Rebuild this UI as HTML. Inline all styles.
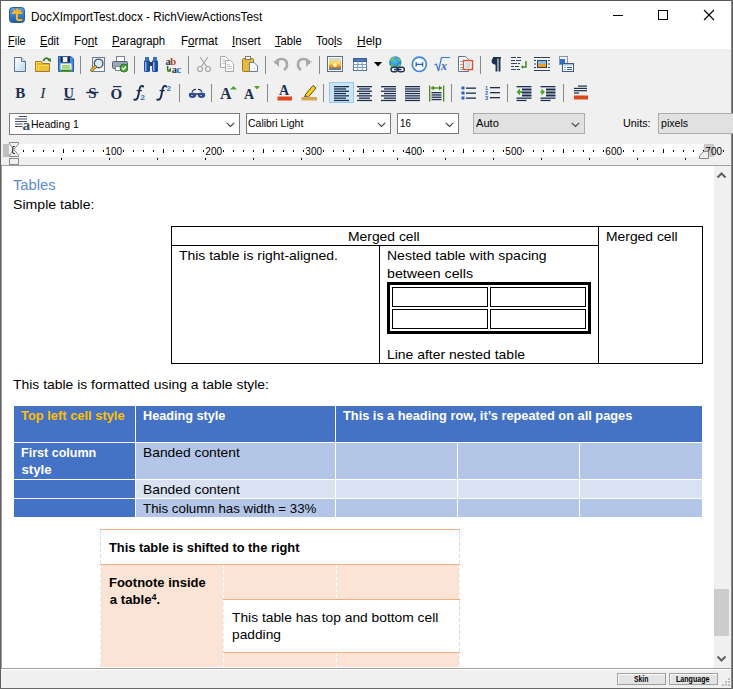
<!DOCTYPE html><html><head><meta charset="utf-8"><style>
html,body{margin:0;padding:0;}
body{width:733px;height:689px;overflow:hidden;position:relative;background:#f0f0f0;font-family:'Liberation Sans',sans-serif;}
div{position:absolute;box-sizing:border-box;}
.t{white-space:pre;}
</style></head><body>

<div style="left:0px;top:0px;width:733px;height:689px;background:#f0f0f0;"></div>
<div style="left:1px;top:1px;width:731px;height:48px;background:#ffffff;"></div>
<div style="left:0px;top:0px;width:733px;height:1px;background:#5a5a5a;"></div>
<div style="left:0px;top:0px;width:1px;height:689px;background:#5f5f5f;"></div>
<div style="left:731px;top:0px;width:1px;height:689px;background:#8a8a8a;"></div>
<div style="left:732px;top:0px;width:1px;height:689px;background:#5a5a5a;"></div>
<div style="left:0px;top:688px;width:733px;height:1px;background:#6a6a6a;"></div>
<svg style="position:absolute;left:9px;top:7px;" width="16" height="16" viewBox="0 0 16 16"><defs><linearGradient id="ig" x1="0" y1="0" x2="0" y2="1"><stop offset="0" stop-color="#5aa0e0"/><stop offset="1" stop-color="#1d5aa8"/></linearGradient></defs>
<rect x="0.5" y="0.5" width="15" height="15" rx="3" fill="url(#ig)" stroke="#2a5d9a"/>
<path d="M8 2.5V11.5Q8 13 9.5 13H12.5M3.5 6H12.5M5 3.5L8 6L11 3.5" stroke="#ffb526" stroke-width="2" fill="none" stroke-linecap="round"/></svg>
<div class="t" style="left:31.20px;top:10.80px;font-size:12px;line-height:12px;color:#000;font-weight:normal;font-family:'Liberation Sans',sans-serif;transform:scaleX(0.9802);transform-origin:0 0;">DocXImportTest.docx - RichViewActionsTest</div>
<div style="left:613px;top:15px;width:10px;height:1px;background:#000;"></div>
<div style="left:658px;top:10px;width:10px;height:10px;border:1px solid #000"></div>
<svg style="position:absolute;left:703px;top:9px;" width="12" height="12" viewBox="0 0 12 12"><path d="M1 1L11 11M11 1L1 11" stroke="#000" stroke-width="1.1"/></svg>
<div class="t" style="left:7.80px;top:34.80px;font-size:12px;line-height:12px;color:#000;font-weight:normal;font-family:'Liberation Sans',sans-serif;transform:scaleX(0.9147);transform-origin:0 0;text-underline-offset:1px;"><u>F</u>ile</div>
<div class="t" style="left:40.00px;top:34.80px;font-size:12px;line-height:12px;color:#000;font-weight:normal;font-family:'Liberation Sans',sans-serif;transform:scaleX(0.9240);transform-origin:0 0;text-underline-offset:1px;"><u>E</u>dit</div>
<div class="t" style="left:73.80px;top:34.80px;font-size:12px;line-height:12px;color:#000;font-weight:normal;font-family:'Liberation Sans',sans-serif;transform:scaleX(0.9792);transform-origin:0 0;text-underline-offset:1px;">Fo<u>n</u>t</div>
<div class="t" style="left:111.90px;top:34.80px;font-size:12px;line-height:12px;color:#000;font-weight:normal;font-family:'Liberation Sans',sans-serif;transform:scaleX(0.9493);transform-origin:0 0;text-underline-offset:1px;"><u>P</u>aragraph</div>
<div class="t" style="left:180.60px;top:34.80px;font-size:12px;line-height:12px;color:#000;font-weight:normal;font-family:'Liberation Sans',sans-serif;transform:scaleX(0.9655);transform-origin:0 0;text-underline-offset:1px;">F<u>o</u>rmat</div>
<div class="t" style="left:231.80px;top:34.80px;font-size:12px;line-height:12px;color:#000;font-weight:normal;font-family:'Liberation Sans',sans-serif;transform:scaleX(0.9600);transform-origin:0 0;text-underline-offset:1px;"><u>I</u>nsert</div>
<div class="t" style="left:274.80px;top:34.80px;font-size:12px;line-height:12px;color:#000;font-weight:normal;font-family:'Liberation Sans',sans-serif;transform:scaleX(0.9344);transform-origin:0 0;text-underline-offset:1px;"><u>T</u>able</div>
<div class="t" style="left:316.10px;top:34.80px;font-size:12px;line-height:12px;color:#000;font-weight:normal;font-family:'Liberation Sans',sans-serif;transform:scaleX(0.9315);transform-origin:0 0;text-underline-offset:1px;">Too<u>l</u>s</div>
<div class="t" style="left:356.80px;top:34.80px;font-size:12px;line-height:12px;color:#000;font-weight:normal;font-family:'Liberation Sans',sans-serif;transform:scaleX(0.9964);transform-origin:0 0;text-underline-offset:1px;"><u>H</u>elp</div>
<div style="left:80px;top:56px;width:1px;height:18px;background:#888888;"></div>
<div style="left:134px;top:56px;width:1px;height:18px;background:#888888;"></div>
<div style="left:188px;top:56px;width:1px;height:18px;background:#888888;"></div>
<div style="left:265px;top:56px;width:1px;height:18px;background:#888888;"></div>
<div style="left:319px;top:56px;width:1px;height:18px;background:#888888;"></div>
<div style="left:480px;top:56px;width:1px;height:18px;background:#888888;"></div>
<div style="left:179px;top:84px;width:1px;height:18px;background:#888888;"></div>
<div style="left:211px;top:84px;width:1px;height:18px;background:#888888;"></div>
<div style="left:267px;top:84px;width:1px;height:18px;background:#888888;"></div>
<div style="left:323px;top:84px;width:1px;height:18px;background:#888888;"></div>
<div style="left:451px;top:84px;width:1px;height:18px;background:#888888;"></div>
<div style="left:507px;top:84px;width:1px;height:18px;background:#888888;"></div>
<div style="left:563px;top:84px;width:1px;height:18px;background:#888888;"></div>
<svg style="position:absolute;left:12px;top:56px;" width="16" height="17" viewBox="0 0 16 17"><defs><linearGradient id="gn" x1="0" y1="0" x2="1" y2="1"><stop offset="0" stop-color="#ffffff"/><stop offset="1" stop-color="#bcd8ea"/></linearGradient></defs>
<path d="M2.5 1.5H9.5L13.5 5.5V15.5H2.5Z" fill="url(#gn)" stroke="#5b7288"/><path d="M9.5 1.5V5.5H13.5" fill="#dde9f2" stroke="#5b7288"/></svg>
<svg style="position:absolute;left:35px;top:56px;" width="16" height="17" viewBox="0 0 16 17"><path d="M0.5 5.5H6.5L8 7.5H14.5V15.5H0.5Z" fill="#e6b22e" stroke="#a67828"/><path d="M1.5 6.5V14.5M2 6.5H6" stroke="#ffe646" stroke-width="1"/><rect x="3" y="9" width="11" height="6" fill="#f0c038"/><path d="M3.5 9.5H13.5M3.5 9.5V14.5" stroke="#ffe646"/>
<path d="M8.3 5.2Q10.5 0.2 14.2 3.6" stroke="#2f7a1a" stroke-width="1.7" fill="none"/><path d="M12 3.8L16 2.2L15.6 6.2Z" fill="#2f7a1a"/></svg>
<svg style="position:absolute;left:58px;top:56px;" width="16" height="17" viewBox="0 0 16 17"><path d="M0.5 0.5H13L15.5 3V15.5H0.5Z" fill="#4a8ae0" stroke="#2a5aa0"/><rect x="2.5" y="1" width="9.5" height="5.5" fill="#1a2a48"/><rect x="4.8" y="1" width="4.6" height="5" fill="#f2f2f2"/>
<rect x="2.5" y="7.5" width="11" height="8" fill="#f4faf0"/><path d="M4 9.8H12M4 11.8H12" stroke="#7ac040" stroke-width="1.3"/><rect x="2.5" y="13.6" width="11" height="2.2" fill="#3a8a20"/></svg>
<svg style="position:absolute;left:89px;top:56px;" width="16" height="17" viewBox="0 0 16 17"><rect x="3.5" y="1.5" width="12" height="14" fill="#f6f8fb" stroke="#6a7e94"/><circle cx="9.6" cy="7.4" r="4.3" fill="#dcecf6" stroke="#4a5a6e" stroke-width="1.4"/><path d="M6.3 10.7L2.8 14.2" stroke="#7a5a1a" stroke-width="3.2" stroke-linecap="round"/><path d="M6.3 10.7L2.8 14.2" stroke="#e8b83a" stroke-width="1.8" stroke-linecap="round"/></svg>
<svg style="position:absolute;left:112px;top:56px;" width="16" height="17" viewBox="0 0 16 17"><rect x="4.5" y="0.5" width="8" height="5" fill="#fff" stroke="#7a8796"/><rect x="0.5" y="5.5" width="15" height="7" rx="1" fill="#9aa8b8" stroke="#56657a"/><rect x="3.5" y="10.5" width="9" height="4" fill="#fff" stroke="#7a8796"/>
<circle cx="12" cy="12" r="4" fill="#4aa83a" stroke="#2f7a2a"/><path d="M10 12L11.5 13.5L14 10.5" stroke="#fff" stroke-width="1.4" fill="none"/></svg>
<svg style="position:absolute;left:143px;top:56px;" width="16" height="17" viewBox="0 0 16 17"><rect x="1" y="4" width="6" height="12" rx="1.5" fill="#1e4f9e"/><rect x="9" y="4" width="6" height="12" rx="1.5" fill="#1e4f9e"/><rect x="2" y="1" width="4" height="4" fill="#3b6fc0"/><rect x="10" y="1" width="4" height="4" fill="#3b6fc0"/>
<rect x="2" y="6" width="1.5" height="9" fill="#8fb8ee"/><rect x="10" y="6" width="1.5" height="9" fill="#8fb8ee"/><rect x="6" y="6" width="4" height="4" fill="#2a3f66"/></svg>
<svg style="position:absolute;left:165px;top:56px;" width="17" height="17" viewBox="0 0 17 17"><text x="0.6" y="8.7" font-family="Liberation Serif" font-size="10.5" font-weight="bold" fill="#1f3558">a</text><text x="5.3" y="8.7" font-family="Liberation Serif" font-size="10.5" font-weight="bold" fill="#b0440f">b</text>
<text x="6.7" y="16.8" font-family="Liberation Serif" font-size="10.5" font-weight="bold" fill="#1f3558">a</text><text x="11.6" y="16.8" font-family="Liberation Serif" font-size="10.5" font-weight="bold" fill="#2a64d0">c</text><path d="M2.6 10V14.6" stroke="#2f6e12" stroke-width="1.5"/><path d="M2 15.7H5.9V11.6Z" fill="#2f6e12"/></svg>
<svg style="position:absolute;left:196px;top:56px;" width="16" height="17" viewBox="0 0 16 17"><path d="M4 1L11 11M12 1L5 11" stroke="#a8a8a8" stroke-width="1.3"/><circle cx="4" cy="13" r="2.5" fill="none" stroke="#a8a8a8" stroke-width="1.2"/><circle cx="12" cy="13" r="2.5" fill="none" stroke="#a8a8a8" stroke-width="1.2"/></svg>
<svg style="position:absolute;left:219px;top:56px;" width="16" height="17" viewBox="0 0 16 17"><path d="M1.5 0.5H6.5L9.5 3.5V11.5H1.5Z" fill="#fbfbfb" stroke="#a9a9a9"/><path d="M3 3.5H6M3 5.5H7.5M3 7.5H7.5" stroke="#c4c4c4" stroke-width="0.9"/><path d="M6.5 4.5H11.5L14.5 7.5V15.5H6.5Z" fill="#fbfbfb" stroke="#a9a9a9"/><path d="M8 8.5H11M8 10.5H13M8 12.5H13" stroke="#c4c4c4" stroke-width="0.9"/></svg>
<svg style="position:absolute;left:242px;top:56px;" width="16" height="17" viewBox="0 0 16 17"><rect x="0.5" y="2.5" width="11" height="13" rx="1" fill="#e8b838" stroke="#a07a20"/><rect x="3.5" y="0.5" width="5" height="3" fill="#fff" stroke="#7a7a7a"/><path d="M7.5 6.5H12L15.5 10V15.5H7.5Z" fill="#f4f8fb" stroke="#6a7f96"/></svg>
<svg style="position:absolute;left:273px;top:56px;" width="16" height="17" viewBox="0 0 16 17"><path d="M3 8Q3 3 8.5 3Q14 3 14 9Q14 12 11 14" stroke="#a9a9a9" stroke-width="2.6" fill="none"/><path d="M0 5L6 11V5Z" fill="#a9a9a9"/></svg>
<svg style="position:absolute;left:296px;top:56px;" width="16" height="17" viewBox="0 0 16 17"><path d="M13 8Q13 3 7.5 3Q2 3 2 9Q2 12 5 14" stroke="#a9a9a9" stroke-width="2.6" fill="none"/><path d="M16 5L10 11V5Z" fill="#a9a9a9"/></svg>
<svg style="position:absolute;left:327px;top:56px;" width="16" height="17" viewBox="0 0 16 17"><defs><linearGradient id="gs" x1="0" y1="0" x2="0" y2="1"><stop offset="0" stop-color="#c8def0"/><stop offset="0.45" stop-color="#ffd24a"/><stop offset="0.7" stop-color="#f08a1a"/><stop offset="1" stop-color="#3a70b8"/></linearGradient></defs>
<rect x="0.5" y="0.5" width="15" height="15" fill="#fff" stroke="#5a6f86"/><rect x="2" y="2" width="12" height="12" fill="url(#gs)"/><circle cx="8" cy="9" r="2" fill="#fff6c0"/></svg>
<svg style="position:absolute;left:350px;top:56px;" width="17" height="17" viewBox="0 0 17 17"><rect x="3.5" y="2.5" width="13" height="12" fill="#fff" stroke="#5a7aa6"/><rect x="3.5" y="2.5" width="13" height="3" fill="#4a78c0" stroke="#3a5f96"/><path d="M3.5 8.5H16.5M3.5 11.5H16.5M7.8 5.5V14.5M12.2 5.5V14.5" stroke="#7d9cc6"/></svg>
<svg style="position:absolute;left:388px;top:56px;" width="17" height="17" viewBox="0 0 17 17"><defs><radialGradient id="gg" cx="0.45" cy="0.4" r="0.6"><stop offset="0" stop-color="#4ac0f0"/><stop offset="1" stop-color="#2a78c0"/></radialGradient></defs><circle cx="7.3" cy="6.4" r="6.2" fill="url(#gg)"/>
<path d="M2 4Q4 1 7 1Q5 3 6 5Q3 6 2 4ZM9 2Q12 2 13 5Q11 6 10 4ZM2.5 9Q5 8 7 10Q5 12 3 11Z M11 8Q13 8 13 9Q12 11 10 11Z" fill="#6cc84a"/>
<rect x="3" y="11.2" width="6.6" height="4.6" rx="2.3" fill="#fff" stroke="#1f3552" stroke-width="1.4"/><rect x="9.8" y="11.2" width="6.6" height="4.6" rx="2.3" fill="#fff" stroke="#1f3552" stroke-width="1.4"/><path d="M6 13.5H13.5" stroke="#1f3552" stroke-width="1.5"/></svg>
<svg style="position:absolute;left:411px;top:56px;" width="17" height="17" viewBox="0 0 17 17"><ellipse cx="8.3" cy="8.3" rx="7" ry="7.2" fill="#fff" stroke="#3a86e0" stroke-width="1.7"/><path d="M5.2 8.4H11.6M5.2 6.2V10.4M11.6 6.2V10.4" stroke="#2a5fc8" stroke-width="1.4"/></svg>
<svg style="position:absolute;left:434px;top:56px;" width="16" height="17" viewBox="0 0 16 17"><path d="M0.5 9L2.5 8L4.5 15L7.5 1.5H16" stroke="#3a7ad0" stroke-width="1.2" fill="none"/><text x="7" y="13.5" font-family="Liberation Serif" font-style="italic" font-weight="bold" font-size="12" fill="#3a6ac8">x</text></svg>
<svg style="position:absolute;left:458px;top:56px;" width="16" height="17" viewBox="0 0 16 17"><path d="M0.5 0.5H7.5L10.5 3.5V15.5H0.5Z" fill="#fafcfe" stroke="#5f7488"/><path d="M2 5.5H5M2 8.5H5M2 11.5H5M2 13.5H8" stroke="#8aa0b6" stroke-width="0.9"/><rect x="5.5" y="4.5" width="9" height="9" fill="#fff" stroke="#e0502a" stroke-width="1.4"/><path d="M7.5 7H12.5M7.5 9H12.5M7.5 11H12.5" stroke="#9ab0c6" stroke-width="0.9"/></svg>
<svg style="position:absolute;left:489px;top:56px;" width="16" height="17" viewBox="0 0 16 17"><path d="M4 1.8H12" stroke="#1c3050" stroke-width="1.6"/><path d="M7.5 1.8V15.5M10.5 1.8V15.5" stroke="#1c3050" stroke-width="1.9" fill="none"/><path d="M7.5 1.2Q2.6 1.2 2.6 5Q2.6 8.8 7.5 8.8Z" fill="#1c3050"/></svg>
<svg style="position:absolute;left:511px;top:56px;" width="16" height="17" viewBox="0 0 16 17"><path d="M0 1.5H5M6 1.5H10M0 4.5H4M5 4.5H10M0 7.5H6M7 7.5H9M0 10.5H3M4 10.5H8M0 13.5H5M6 13.5H9" stroke="#2f4460" stroke-width="1.2"/><path d="M15 5V11H11" stroke="#3c8a1e" stroke-width="1.5" fill="none"/><path d="M12 9L10 11L12 13Z" fill="#3c8a1e"/></svg>
<svg style="position:absolute;left:534px;top:56px;" width="16" height="17" viewBox="0 0 16 17"><path d="M0 1.5H16M0 14.5H16M0 4.5H2M14 4.5H16M0 8H2M14 8H16M0 11.5H2M14 11.5H16" stroke="#2f4460" stroke-width="1.2"/><rect x="3.5" y="4.5" width="9" height="7" fill="#f0a020" stroke="#2f4460"/><rect x="4" y="5" width="8" height="3" fill="#8abadf"/></svg>
<svg style="position:absolute;left:558px;top:56px;" width="16" height="17" viewBox="0 0 16 17"><rect x="1.5" y="0.5" width="8" height="8" fill="none" stroke="#2a3a5a" stroke-dasharray="1 1"/><rect x="2" y="3" width="5" height="5" fill="#2f6fd0"/><rect x="4.5" y="7.5" width="11" height="8" fill="#f8fbff" stroke="#3a5a8a"/><rect x="5" y="8" width="10" height="1.5" fill="#a8c0dc"/><path d="M6.5 11.5H7.5M9 11.5H14M6.5 13.5H7.5M9 13.5H14" stroke="#3a5a8a"/></svg>
<svg style="position:absolute;left:374px;top:62px;" width="9" height="5" viewBox="0 0 9 5"><path d="M0 0H8L4 4.5Z" fill="#000"/></svg>
<svg style="position:absolute;left:14px;top:85px;" width="18" height="18" viewBox="0 0 18 18"><text x="1.3" y="13.1" font-family="Liberation Serif" font-size="15" font-weight="bold" font-style="normal" fill="#1c2f50">B</text></svg>
<svg style="position:absolute;left:38px;top:85px;" width="18" height="18" viewBox="0 0 18 18"><text x="2.2" y="13.3" font-family="Liberation Serif" font-size="15.5" font-weight="normal" font-style="italic" fill="#1c2f50">I</text></svg>
<svg style="position:absolute;left:62px;top:85px;" width="18" height="18" viewBox="0 0 18 18"><text x="1.6" y="12.8" font-family="Liberation Serif" font-size="14.5" font-weight="bold" font-style="normal" fill="#1c2f50">U</text><rect x="2.2" y="13.6" width="10.8" height="1.5" fill="#1c2f50"/></svg>
<svg style="position:absolute;left:85px;top:85px;" width="18" height="18" viewBox="0 0 18 18"><text x="3.3" y="13.2" font-family="Liberation Serif" font-size="15" font-weight="bold" font-style="normal" fill="#1c2f50">S</text><rect x="1.2" y="6.8" width="12.3" height="1.4" fill="#1c2f50"/></svg>
<svg style="position:absolute;left:109px;top:85px;" width="18" height="18" viewBox="0 0 18 18"><text x="1.6" y="14" font-family="Liberation Serif" font-size="15" font-weight="bold" font-style="normal" fill="#1c2f50">O</text><rect x="4" y="1" width="8.3" height="1.2" fill="#1c2f50"/></svg>
<svg style="position:absolute;left:132px;top:85px;" width="18" height="18" viewBox="0 0 18 18"><path d="M11.2 1.6Q10.2 0.4 8.9 1.2Q7.8 2 7.2 6Q6.4 11.5 5.3 13.6Q4.3 15.3 2.3 14.6" stroke="#1c2f50" stroke-width="1.9" fill="none" stroke-linecap="round"/><path d="M4.6 5.6H9.8" stroke="#1c2f50" stroke-width="1.3"/><text x="8.6" y="14.7" font-family="Liberation Sans" font-weight="bold" font-size="8" fill="#1f70c8">2</text></svg>
<svg style="position:absolute;left:155px;top:85px;" width="18" height="18" viewBox="0 0 18 18"><path d="M11.2 1.6Q10.2 0.4 8.9 1.2Q7.8 2 7.2 6Q6.4 11.5 5.3 13.6Q4.3 15.3 2.3 14.6" stroke="#1c2f50" stroke-width="1.9" fill="none" stroke-linecap="round"/><path d="M4.6 5.6H9.8" stroke="#1c2f50" stroke-width="1.3"/><text x="11.6" y="5.9" font-family="Liberation Sans" font-weight="bold" font-size="8" fill="#1f70c8">2</text></svg>
<svg style="position:absolute;left:188px;top:88px;" width="18" height="11" viewBox="0 0 18 11"><path d="M4 4Q5.5 1 8 1.5M14 4Q12.5 1 10 1.5" stroke="#1c2f50" stroke-width="1.2" fill="none"/><path d="M1 6H17" stroke="#1c2f50" stroke-width="1.5"/><ellipse cx="4.5" cy="7.3" rx="3.6" ry="2.7" fill="#2f4f8a"/><ellipse cx="13.5" cy="7.3" rx="3.6" ry="2.7" fill="#2f4f8a"/><path d="M3 7.5H5M12 7.5H14" stroke="#8fb0e0"/></svg>
<svg style="position:absolute;left:220px;top:85px;" width="18" height="15" viewBox="0 0 18 15"><text x="0" y="13.5" font-family="Liberation Serif" font-size="16" font-weight="bold" fill="#1c2f50">A</text><path d="M10 4.5L13.5 1L17 4.5Z" fill="#4aa32a"/></svg>
<svg style="position:absolute;left:244px;top:85px;" width="18" height="15" viewBox="0 0 18 15"><text x="0" y="13.5" font-family="Liberation Serif" font-size="14" font-weight="bold" fill="#1c2f50">A</text><path d="M10 1H16L13 4.5Z" fill="#4aa32a"/></svg>
<svg style="position:absolute;left:277px;top:84px;" width="16" height="17" viewBox="0 0 16 17"><text x="2" y="11" font-family="Liberation Serif" font-size="14" font-weight="bold" fill="#1c2f50">A</text><rect x="0.5" y="12.5" width="14.5" height="4" fill="#e0461a"/></svg>
<svg style="position:absolute;left:301px;top:84px;" width="17" height="17" viewBox="0 0 17 17"><path d="M4 11L12 1.5L15 4L7 13.5Z" fill="#ffd21a" stroke="#5a4a1a"/><path d="M3.5 11.5L6.5 14L3 14Z" fill="#3a3a3a"/><rect x="0.5" y="13" width="15.5" height="3.5" fill="#d8a850"/></svg>
<div style="left:329px;top:82px;width:25px;height:21px;background:#cce4f7;border:1px solid #99c9ef"></div>
<svg style="position:absolute;left:333px;top:85px;" width="18" height="18" viewBox="0 0 18 18"><rect x="1" y="1" width="15" height="1.3" fill="#1c2f50"/><rect x="1" y="3.3" width="12" height="1.3" fill="#1c2f50"/><rect x="1" y="5.6" width="15" height="1.3" fill="#1c2f50"/><rect x="1" y="7.9" width="12" height="1.3" fill="#1c2f50"/><rect x="1" y="10.2" width="15" height="1.3" fill="#1c2f50"/><rect x="1" y="12.5" width="12" height="1.3" fill="#1c2f50"/><rect x="1" y="14.8" width="15" height="1.3" fill="#1c2f50"/></svg>
<svg style="position:absolute;left:356px;top:85px;" width="18" height="18" viewBox="0 0 18 18"><rect x="1" y="1" width="15" height="1.3" fill="#1c2f50"/><rect x="3" y="3.3" width="11" height="1.3" fill="#1c2f50"/><rect x="1" y="5.6" width="15" height="1.3" fill="#1c2f50"/><rect x="3" y="7.9" width="11" height="1.3" fill="#1c2f50"/><rect x="1" y="10.2" width="15" height="1.3" fill="#1c2f50"/><rect x="3" y="12.5" width="11" height="1.3" fill="#1c2f50"/><rect x="1" y="14.8" width="15" height="1.3" fill="#1c2f50"/></svg>
<svg style="position:absolute;left:380px;top:85px;" width="18" height="18" viewBox="0 0 18 18"><rect x="1" y="1" width="15" height="1.3" fill="#1c2f50"/><rect x="4" y="3.3" width="12" height="1.3" fill="#1c2f50"/><rect x="1" y="5.6" width="15" height="1.3" fill="#1c2f50"/><rect x="4" y="7.9" width="12" height="1.3" fill="#1c2f50"/><rect x="1" y="10.2" width="15" height="1.3" fill="#1c2f50"/><rect x="4" y="12.5" width="12" height="1.3" fill="#1c2f50"/><rect x="1" y="14.8" width="15" height="1.3" fill="#1c2f50"/></svg>
<svg style="position:absolute;left:404px;top:85px;" width="18" height="18" viewBox="0 0 18 18"><rect x="1" y="1" width="15" height="1.3" fill="#1c2f50"/><rect x="1" y="3.3" width="15" height="1.3" fill="#1c2f50"/><rect x="1" y="5.6" width="15" height="1.3" fill="#1c2f50"/><rect x="1" y="7.9" width="15" height="1.3" fill="#1c2f50"/><rect x="1" y="10.2" width="15" height="1.3" fill="#1c2f50"/><rect x="1" y="12.5" width="15" height="1.3" fill="#1c2f50"/><rect x="1" y="14.8" width="15" height="1.3" fill="#1c2f50"/></svg>
<svg style="position:absolute;left:428px;top:85px;" width="18" height="18" viewBox="0 0 18 18"><rect x="1" y="0.5" width="1.3" height="16" fill="#4a8a1e"/><rect x="15" y="0.5" width="1.3" height="16" fill="#4a8a1e"/><path d="M3 3H14" stroke="#4a8a1e" stroke-width="1.3"/><path d="M3 3L6 0.5V5.5Z M14 3L11 0.5V5.5Z" fill="#4a8a1e"/><rect x="3.5" y="7" width="10" height="1.3" fill="#1c2f50"/><rect x="3.5" y="9.3" width="10" height="1.3" fill="#1c2f50"/><rect x="3.5" y="11.6" width="10" height="1.3" fill="#1c2f50"/><rect x="3.5" y="13.9" width="10" height="1.3" fill="#1c2f50"/></svg>
<svg style="position:absolute;left:461px;top:85px;" width="17" height="17" viewBox="0 0 17 17"><rect x="0.5" y="1.5" width="3" height="3" fill="#2a60c0"/><rect x="5" y="2.5" width="10" height="1.3" fill="#1c2f50"/><rect x="0.5" y="6.5" width="3" height="3" fill="#2a60c0"/><rect x="5" y="7.5" width="10" height="1.3" fill="#1c2f50"/><rect x="0.5" y="11.5" width="3" height="3" fill="#2a60c0"/><rect x="5" y="12.5" width="10" height="1.3" fill="#1c2f50"/></svg>
<svg style="position:absolute;left:485px;top:85px;" width="17" height="17" viewBox="0 0 17 17"><text x="0" y="5" font-family="Liberation Sans" font-weight="bold" font-size="5.5" fill="#2a60c0">1</text><rect x="5" y="2" width="10" height="1.3" fill="#1c2f50"/><text x="0" y="10" font-family="Liberation Sans" font-weight="bold" font-size="5.5" fill="#2a60c0">2</text><rect x="5" y="7" width="10" height="1.3" fill="#1c2f50"/><text x="0" y="15" font-family="Liberation Sans" font-weight="bold" font-size="5.5" fill="#2a60c0">3</text><rect x="5" y="12" width="10" height="1.3" fill="#1c2f50"/></svg>
<svg style="position:absolute;left:516px;top:85px;" width="17" height="17" viewBox="0 0 17 17"><rect x="0.5" y="1" width="15" height="1.3" fill="#1c2f50"/><rect x="6" y="3.5" width="9.5" height="2" fill="#1c2f50"/><rect x="6" y="6.5" width="9.5" height="2" fill="#1c2f50"/><rect x="6" y="9.5" width="9.5" height="2" fill="#1c2f50"/><rect x="0.5" y="12.5" width="15" height="1.3" fill="#1c2f50"/><rect x="0.5" y="14.8" width="10" height="1.3" fill="#1c2f50"/><path d="M0.5 7L4 3.5V10.5Z" fill="#4aa32a"/><rect x="3" y="6" width="3" height="2" fill="#4aa32a"/></svg>
<svg style="position:absolute;left:540px;top:85px;" width="17" height="17" viewBox="0 0 17 17"><rect x="0.5" y="1" width="15" height="1.3" fill="#1c2f50"/><rect x="6" y="3.5" width="9.5" height="2" fill="#1c2f50"/><rect x="6" y="6.5" width="9.5" height="2" fill="#1c2f50"/><rect x="6" y="9.5" width="9.5" height="2" fill="#1c2f50"/><rect x="0.5" y="12.5" width="15" height="1.3" fill="#1c2f50"/><rect x="0.5" y="14.8" width="10" height="1.3" fill="#1c2f50"/><path d="M5 7L1.5 3.5V10.5Z" fill="#4aa32a"/><rect x="0.5" y="6" width="2" height="2" fill="#4aa32a"/></svg>
<svg style="position:absolute;left:573px;top:85px;" width="16" height="16" viewBox="0 0 16 16"><rect x="5" y="0.5" width="9" height="1.2" fill="#1c2f50"/><rect x="1" y="2.8" width="13" height="1.2" fill="#1c2f50"/><rect x="1" y="5.1" width="13" height="1.2" fill="#1c2f50"/><rect x="1" y="7.4" width="5" height="1.2" fill="#1c2f50"/><rect x="1" y="10.5" width="14" height="4" fill="#e0461a"/></svg>
<div style="left:9px;top:113px;width:231px;height:22px;background:#fff;border:1px solid #7a7a7a"></div>
<svg style="position:absolute;left:226px;top:122px;" width="10" height="6" viewBox="0 0 10 6"><path d="M0.8 0.8L4.5 4.5L8.2 0.8" stroke="#404040" stroke-width="1.1" fill="none"/></svg>
<div style="left:246px;top:113px;width:145px;height:21px;background:#fff;border:1px solid #7a7a7a"></div>
<svg style="position:absolute;left:377px;top:122px;" width="10" height="6" viewBox="0 0 10 6"><path d="M0.8 0.8L4.5 4.5L8.2 0.8" stroke="#404040" stroke-width="1.1" fill="none"/></svg>
<div style="left:397px;top:113px;width:62px;height:21px;background:#fff;border:1px solid #7a7a7a"></div>
<svg style="position:absolute;left:445px;top:122px;" width="10" height="6" viewBox="0 0 10 6"><path d="M0.8 0.8L4.5 4.5L8.2 0.8" stroke="#404040" stroke-width="1.1" fill="none"/></svg>
<div style="left:473px;top:113px;width:112px;height:21px;background:#e1e1e1;border:1px solid #adadad"></div>
<svg style="position:absolute;left:571px;top:122px;" width="10" height="6" viewBox="0 0 10 6"><path d="M0.8 0.8L4.5 4.5L8.2 0.8" stroke="#404040" stroke-width="1.1" fill="none"/></svg>
<div style="left:658px;top:113px;width:80px;height:21px;background:#e1e1e1;border:1px solid #adadad"></div>
<svg style="position:absolute;left:14px;top:115px;" width="17" height="16" viewBox="0 0 17 16"><path d="M5 1.5H13M1 4H13M1 6.5H13M1 9H8.5M1 11.5H8.5" stroke="#3d4f66" stroke-width="1.1"/><text x="8.6" y="14.7" font-family="Liberation Serif" font-size="15.5" font-weight="bold" fill="#3d4f66">a</text></svg>
<div class="t" style="left:31.40px;top:119.22px;font-size:11.5px;line-height:11.5px;color:#000;font-weight:normal;font-family:'Liberation Sans',sans-serif;transform:scaleX(0.9115);transform-origin:0 0;">Heading 1</div>
<div class="t" style="left:248.20px;top:118.22px;font-size:11.5px;line-height:11.5px;color:#000;font-weight:normal;font-family:'Liberation Sans',sans-serif;transform:scaleX(0.9107);transform-origin:0 0;">Calibri Light</div>
<div class="t" style="left:400.00px;top:118.22px;font-size:11.5px;line-height:11.5px;color:#000;font-weight:normal;font-family:'Liberation Sans',sans-serif;transform:scaleX(0.8442);transform-origin:0 0;">16</div>
<div class="t" style="left:476.40px;top:118.22px;font-size:11.5px;line-height:11.5px;color:#000;font-weight:normal;font-family:'Liberation Sans',sans-serif;transform:scaleX(0.9678);transform-origin:0 0;">Auto</div>
<div class="t" style="left:622.90px;top:118.22px;font-size:11.5px;line-height:11.5px;color:#000;font-weight:normal;font-family:'Liberation Sans',sans-serif;transform:scaleX(0.9384);transform-origin:0 0;">Units:</div>
<div class="t" style="left:661.10px;top:118.22px;font-size:11.5px;line-height:11.5px;color:#000;font-weight:normal;font-family:'Liberation Sans',sans-serif;transform:scaleX(0.9214);transform-origin:0 0;">pixels</div>
<div style="left:1px;top:164px;width:730px;height:1px;background:#f0f0f0;"></div>
<div style="left:9px;top:144px;width:695px;height:13px;background:#ffffff;"></div>
<div style="left:3px;top:144px;width:6px;height:13px;background:#c0c0c0;"></div>
<div style="left:704px;top:144px;width:10px;height:13px;background:#c8c8c8;"></div>
<div style="left:23px;top:150px;width:1px;height:2px;background:#000;"></div>
<div style="left:33px;top:150px;width:1px;height:2px;background:#000;"></div>
<div style="left:43px;top:150px;width:1px;height:2px;background:#000;"></div>
<div style="left:53px;top:150px;width:1px;height:2px;background:#000;"></div>
<div style="left:63px;top:149px;width:1px;height:4px;background:#000;"></div>
<div style="left:73px;top:150px;width:1px;height:2px;background:#000;"></div>
<div style="left:83px;top:150px;width:1px;height:2px;background:#000;"></div>
<div style="left:93px;top:150px;width:1px;height:2px;background:#000;"></div>
<div style="left:103px;top:150px;width:1px;height:2px;background:#000;"></div>
<div style="left:123px;top:150px;width:1px;height:2px;background:#000;"></div>
<div style="left:133px;top:150px;width:1px;height:2px;background:#000;"></div>
<div style="left:143px;top:150px;width:1px;height:2px;background:#000;"></div>
<div style="left:153px;top:150px;width:1px;height:2px;background:#000;"></div>
<div style="left:163px;top:149px;width:1px;height:4px;background:#000;"></div>
<div style="left:173px;top:150px;width:1px;height:2px;background:#000;"></div>
<div style="left:183px;top:150px;width:1px;height:2px;background:#000;"></div>
<div style="left:193px;top:150px;width:1px;height:2px;background:#000;"></div>
<div style="left:203px;top:150px;width:1px;height:2px;background:#000;"></div>
<div style="left:223px;top:150px;width:1px;height:2px;background:#000;"></div>
<div style="left:233px;top:150px;width:1px;height:2px;background:#000;"></div>
<div style="left:243px;top:150px;width:1px;height:2px;background:#000;"></div>
<div style="left:253px;top:150px;width:1px;height:2px;background:#000;"></div>
<div style="left:263px;top:149px;width:1px;height:4px;background:#000;"></div>
<div style="left:273px;top:150px;width:1px;height:2px;background:#000;"></div>
<div style="left:283px;top:150px;width:1px;height:2px;background:#000;"></div>
<div style="left:293px;top:150px;width:1px;height:2px;background:#000;"></div>
<div style="left:303px;top:150px;width:1px;height:2px;background:#000;"></div>
<div style="left:323px;top:150px;width:1px;height:2px;background:#000;"></div>
<div style="left:333px;top:150px;width:1px;height:2px;background:#000;"></div>
<div style="left:343px;top:150px;width:1px;height:2px;background:#000;"></div>
<div style="left:353px;top:150px;width:1px;height:2px;background:#000;"></div>
<div style="left:363px;top:149px;width:1px;height:4px;background:#000;"></div>
<div style="left:373px;top:150px;width:1px;height:2px;background:#000;"></div>
<div style="left:383px;top:150px;width:1px;height:2px;background:#000;"></div>
<div style="left:393px;top:150px;width:1px;height:2px;background:#000;"></div>
<div style="left:403px;top:150px;width:1px;height:2px;background:#000;"></div>
<div style="left:423px;top:150px;width:1px;height:2px;background:#000;"></div>
<div style="left:433px;top:150px;width:1px;height:2px;background:#000;"></div>
<div style="left:443px;top:150px;width:1px;height:2px;background:#000;"></div>
<div style="left:453px;top:150px;width:1px;height:2px;background:#000;"></div>
<div style="left:463px;top:149px;width:1px;height:4px;background:#000;"></div>
<div style="left:473px;top:150px;width:1px;height:2px;background:#000;"></div>
<div style="left:483px;top:150px;width:1px;height:2px;background:#000;"></div>
<div style="left:493px;top:150px;width:1px;height:2px;background:#000;"></div>
<div style="left:503px;top:150px;width:1px;height:2px;background:#000;"></div>
<div style="left:523px;top:150px;width:1px;height:2px;background:#000;"></div>
<div style="left:533px;top:150px;width:1px;height:2px;background:#000;"></div>
<div style="left:543px;top:150px;width:1px;height:2px;background:#000;"></div>
<div style="left:553px;top:150px;width:1px;height:2px;background:#000;"></div>
<div style="left:563px;top:149px;width:1px;height:4px;background:#000;"></div>
<div style="left:573px;top:150px;width:1px;height:2px;background:#000;"></div>
<div style="left:583px;top:150px;width:1px;height:2px;background:#000;"></div>
<div style="left:593px;top:150px;width:1px;height:2px;background:#000;"></div>
<div style="left:603px;top:150px;width:1px;height:2px;background:#000;"></div>
<div style="left:623px;top:150px;width:1px;height:2px;background:#000;"></div>
<div style="left:633px;top:150px;width:1px;height:2px;background:#000;"></div>
<div style="left:643px;top:150px;width:1px;height:2px;background:#000;"></div>
<div style="left:653px;top:150px;width:1px;height:2px;background:#000;"></div>
<div style="left:663px;top:149px;width:1px;height:4px;background:#000;"></div>
<div style="left:673px;top:150px;width:1px;height:2px;background:#000;"></div>
<div style="left:683px;top:150px;width:1px;height:2px;background:#000;"></div>
<div style="left:693px;top:150px;width:1px;height:2px;background:#000;"></div>
<div style="left:703px;top:150px;width:1px;height:2px;background:#000;"></div>
<div style="left:723px;top:150px;width:1px;height:2px;background:#000;"></div>
<div class="t" style="left:93.7px;top:146.6px;width:40px;text-align:center;font-size:10px;line-height:10px;color:#000;background:transparent">100</div>
<div class="t" style="left:193.7px;top:146.6px;width:40px;text-align:center;font-size:10px;line-height:10px;color:#000;background:transparent">200</div>
<div class="t" style="left:293.7px;top:146.6px;width:40px;text-align:center;font-size:10px;line-height:10px;color:#000;background:transparent">300</div>
<div class="t" style="left:393.7px;top:146.6px;width:40px;text-align:center;font-size:10px;line-height:10px;color:#000;background:transparent">400</div>
<div class="t" style="left:493.7px;top:146.6px;width:40px;text-align:center;font-size:10px;line-height:10px;color:#000;background:transparent">500</div>
<div class="t" style="left:593.7px;top:146.6px;width:40px;text-align:center;font-size:10px;line-height:10px;color:#000;background:transparent">600</div>
<div class="t" style="left:693.7px;top:146.6px;width:40px;text-align:center;font-size:10px;line-height:10px;color:#000;background:transparent">700</div>
<div style="left:61px;top:158px;width:1px;height:2px;background:#000;"></div>
<div style="left:109px;top:158px;width:1px;height:2px;background:#000;"></div>
<div style="left:157px;top:158px;width:1px;height:2px;background:#000;"></div>
<div style="left:205px;top:158px;width:1px;height:2px;background:#000;"></div>
<div style="left:253px;top:158px;width:1px;height:2px;background:#000;"></div>
<div style="left:301px;top:158px;width:1px;height:2px;background:#000;"></div>
<div style="left:349px;top:158px;width:1px;height:2px;background:#000;"></div>
<div style="left:397px;top:158px;width:1px;height:2px;background:#000;"></div>
<div style="left:445px;top:158px;width:1px;height:2px;background:#000;"></div>
<div style="left:493px;top:158px;width:1px;height:2px;background:#000;"></div>
<div style="left:541px;top:158px;width:1px;height:2px;background:#000;"></div>
<div style="left:589px;top:158px;width:1px;height:2px;background:#000;"></div>
<div style="left:637px;top:158px;width:1px;height:2px;background:#000;"></div>
<div style="left:685px;top:158px;width:1px;height:2px;background:#000;"></div>
<svg style="position:absolute;left:8px;top:141px;" width="12" height="25" viewBox="0 0 12 25"><path d="M1.5 1.5H10.5V3L6 8.5L10.5 14V15.5H1.5V14L6 8.5L1.5 3Z" fill="#f0f0f0" stroke="#8a8a8a"/><rect x="1.5" y="17.5" width="9" height="6" fill="#f0f0f0" stroke="#8a8a8a"/></svg>
<div class="t" style="left:11.50px;top:146.00px;font-size:10px;line-height:10px;color:#000;font-weight:normal;font-family:'Liberation Sans',sans-serif;clip-path:inset(0 40% 0 0);">0</div>
<svg style="position:absolute;left:698px;top:150px;" width="12" height="10" viewBox="0 0 12 10"><path d="M1.5 8.5V6L5.5 1.5L10.5 1.5V8.5Z" fill="#f0f0f0" stroke="#8a8a8a"/></svg>
<div style="left:1px;top:165px;width:730px;height:1px;background:#a0a0a0;"></div>
<div style="left:1px;top:166px;width:1px;height:502px;background:#a0a0a0;"></div>
<div style="left:2px;top:166px;width:712px;height:502px;background:#ffffff;"></div>
<div style="left:714px;top:167px;width:16px;height:500px;background:#f0f0f0;"></div>
<div style="left:714px;top:589px;width:15px;height:47px;background:#cdcdcd;"></div>
<svg style="position:absolute;left:716px;top:171px;" width="12" height="9" viewBox="0 0 12 9"><path d="M1.5 6.5L5.5 2.5L9.5 6.5" stroke="#606060" stroke-width="2" fill="none"/></svg>
<svg style="position:absolute;left:716px;top:654px;" width="12" height="9" viewBox="0 0 12 9"><path d="M1.5 2.5L5.5 6.5L9.5 2.5" stroke="#606060" stroke-width="2" fill="none"/></svg>
<div style="left:1px;top:668px;width:730px;height:1px;background:#a0a0a0;"></div>
<div style="left:1px;top:669px;width:730px;height:19px;background:#f0f0f0;"></div>
<div style="left:1px;top:669px;width:730px;height:1px;background:#ffffff;"></div>
<div style="left:617px;top:673px;width:49px;height:12px;background:#e3e3e3;border:1px solid #a0a0a0;box-shadow:inset 1px 1px #fafafa"></div>
<div style="left:669px;top:673px;width:49px;height:12px;background:#e3e3e3;border:1px solid #a0a0a0;box-shadow:inset 1px 1px #fafafa"></div>
<div class="t" style="left:634.40px;top:674.98px;font-size:8.5px;line-height:8.5px;color:#000;font-weight:bold;font-family:'Liberation Sans',sans-serif;transform:scaleX(0.7964);transform-origin:0 0;">Skin</div>
<div class="t" style="left:676.30px;top:674.98px;font-size:8.5px;line-height:8.5px;color:#000;font-weight:bold;font-family:'Liberation Sans',sans-serif;transform:scaleX(0.8346);transform-origin:0 0;">Language</div>
<div style="left:728px;top:678px;width:2px;height:2px;background:#c0c0c0;"></div>
<div style="left:725px;top:681px;width:2px;height:2px;background:#c0c0c0;"></div>
<div style="left:728px;top:681px;width:2px;height:2px;background:#c0c0c0;"></div>
<div style="left:722px;top:684px;width:2px;height:2px;background:#c0c0c0;"></div>
<div style="left:725px;top:684px;width:2px;height:2px;background:#c0c0c0;"></div>
<div style="left:728px;top:684px;width:2px;height:2px;background:#c0c0c0;"></div>
<div class="t" style="left:12.70px;top:177.50px;font-size:14.7px;line-height:14.7px;color:#5a8cd0;font-weight:normal;font-family:'Liberation Sans',sans-serif;transform:scaleX(1.0028);transform-origin:0 0;">Tables</div>
<div class="t" style="left:12.70px;top:198.03px;font-size:13.5px;line-height:13.5px;color:#000;font-weight:normal;font-family:'Liberation Sans',sans-serif;transform:scaleX(1.0445);transform-origin:0 0;">Simple table:</div>
<div style="left:171px;top:226px;width:532px;height:1px;background:#000;"></div>
<div style="left:171px;top:363px;width:532px;height:1px;background:#000;"></div>
<div style="left:171px;top:226px;width:1px;height:138px;background:#000;"></div>
<div style="left:702px;top:226px;width:1px;height:138px;background:#000;"></div>
<div style="left:171px;top:245px;width:428px;height:1px;background:#000;"></div>
<div style="left:379px;top:245px;width:1px;height:118px;background:#000;"></div>
<div style="left:598px;top:226px;width:1px;height:138px;background:#000;"></div>
<div class="t" style="left:348.00px;top:229.53px;font-size:13.5px;line-height:13.5px;color:#000;font-weight:normal;font-family:'Liberation Sans',sans-serif;transform:scaleX(1.0273);transform-origin:0 0;">Merged cell</div>
<div class="t" style="left:606.30px;top:229.53px;font-size:13.5px;line-height:13.5px;color:#000;font-weight:normal;font-family:'Liberation Sans',sans-serif;transform:scaleX(1.0273);transform-origin:0 0;">Merged cell</div>
<div class="t" style="left:178.50px;top:248.53px;font-size:13.5px;line-height:13.5px;color:#000;font-weight:normal;font-family:'Liberation Sans',sans-serif;transform:scaleX(1.0329);transform-origin:0 0;">This table is right-aligned.</div>
<div class="t" style="left:387.00px;top:248.53px;font-size:13.5px;line-height:13.5px;color:#000;font-weight:normal;font-family:'Liberation Sans',sans-serif;transform:scaleX(1.0375);transform-origin:0 0;">Nested table with spacing</div>
<div class="t" style="left:387.00px;top:266.52px;font-size:13.5px;line-height:13.5px;color:#000;font-weight:normal;font-family:'Liberation Sans',sans-serif;transform:scaleX(1.0512);transform-origin:0 0;">between cells</div>
<div class="t" style="left:387.00px;top:347.52px;font-size:13.5px;line-height:13.5px;color:#000;font-weight:normal;font-family:'Liberation Sans',sans-serif;transform:scaleX(1.0328);transform-origin:0 0;">Line after nested table</div>
<div style="left:387px;top:282px;width:204px;height:52px;border:3px solid #000"></div>
<div style="left:392px;top:287px;width:96px;height:20px;border:1px solid #000"></div>
<div style="left:490px;top:287px;width:96px;height:20px;border:1px solid #000"></div>
<div style="left:392px;top:309px;width:96px;height:20px;border:1px solid #000"></div>
<div style="left:490px;top:309px;width:96px;height:20px;border:1px solid #000"></div>
<div class="t" style="left:13.00px;top:377.52px;font-size:13.5px;line-height:13.5px;color:#000;font-weight:normal;font-family:'Liberation Sans',sans-serif;transform:scaleX(1.0303);transform-origin:0 0;">This table is formatted using a table style:</div>
<div style="left:14px;top:406px;width:688px;height:111px;background:#ffffff;"></div>
<div style="left:14px;top:406px;width:688px;height:36px;background:#4472c4;"></div>
<div style="left:14px;top:443px;width:121px;height:36px;background:#4472c4;"></div>
<div style="left:14px;top:480px;width:121px;height:18px;background:#4472c4;"></div>
<div style="left:14px;top:499px;width:121px;height:18px;background:#4472c4;"></div>
<div style="left:136px;top:443px;width:566px;height:36px;background:#b4c6e7;"></div>
<div style="left:136px;top:480px;width:566px;height:18px;background:#d9e2f3;"></div>
<div style="left:136px;top:499px;width:566px;height:18px;background:#b4c6e7;"></div>
<div style="left:135px;top:406px;width:1px;height:111px;background:#ffffff;"></div>
<div style="left:335px;top:406px;width:1px;height:111px;background:#ffffff;"></div>
<div style="left:457px;top:443px;width:1px;height:74px;background:#ffffff;"></div>
<div style="left:579px;top:443px;width:1px;height:74px;background:#ffffff;"></div>
<div class="t" style="left:21.10px;top:408.78px;font-size:13.2px;line-height:13.2px;color:#ffc000;font-weight:bold;font-family:'Liberation Sans',sans-serif;transform:scaleX(0.9771);transform-origin:0 0;">Top left cell style</div>
<div class="t" style="left:143.20px;top:409.28px;font-size:13.2px;line-height:13.2px;color:#ffffff;font-weight:bold;font-family:'Liberation Sans',sans-serif;transform:scaleX(0.9612);transform-origin:0 0;">Heading style</div>
<div class="t" style="left:343.10px;top:409.28px;font-size:13.2px;line-height:13.2px;color:#ffffff;font-weight:bold;font-family:'Liberation Sans',sans-serif;transform:scaleX(0.9708);transform-origin:0 0;">This is a heading row, it’s repeated on all pages</div>
<div class="t" style="left:21.00px;top:445.78px;font-size:13.2px;line-height:13.2px;color:#ffffff;font-weight:bold;font-family:'Liberation Sans',sans-serif;transform:scaleX(0.9508);transform-origin:0 0;">First column</div>
<div class="t" style="left:21.50px;top:463.28px;font-size:13.2px;line-height:13.2px;color:#ffffff;font-weight:bold;font-family:'Liberation Sans',sans-serif;">style</div>
<div class="t" style="left:143.20px;top:445.82px;font-size:13.5px;line-height:13.5px;color:#000;font-weight:normal;font-family:'Liberation Sans',sans-serif;transform:scaleX(1.0236);transform-origin:0 0;">Banded content</div>
<div class="t" style="left:143.20px;top:483.12px;font-size:13.5px;line-height:13.5px;color:#000;font-weight:normal;font-family:'Liberation Sans',sans-serif;transform:scaleX(1.0236);transform-origin:0 0;">Banded content</div>
<div class="t" style="left:143.20px;top:501.73px;font-size:13.5px;line-height:13.5px;color:#000;font-weight:normal;font-family:'Liberation Sans',sans-serif;transform:scaleX(0.9854);transform-origin:0 0;">This column has width = 33%</div>
<div style="left:100px;top:564px;width:359px;height:103px;background:#fbe4d5;"></div>
<div style="left:223px;top:600px;width:236px;height:52px;background:#ffffff;"></div>
<div style="left:100px;top:529px;width:360px;height:1px;background:#f4b083;"></div>
<div style="left:100px;top:564px;width:360px;height:1px;background:#f4b083;"></div>
<div style="left:223px;top:599px;width:237px;height:1px;background:#f4b083;"></div>
<div style="left:223px;top:652px;width:237px;height:1px;background:#f4b083;"></div>
<div style="left:100px;top:530px;width:1px;height:34px;background:repeating-linear-gradient(#dedede 0 4px, transparent 4px 6px)"></div>
<div style="left:459px;top:530px;width:1px;height:34px;background:repeating-linear-gradient(#dedede 0 4px, transparent 4px 6px)"></div>
<div style="left:100px;top:565px;width:1px;height:102px;background:repeating-linear-gradient(#ffffff 0 3px, #e9ecee 3px 6px)"></div>
<div style="left:459px;top:565px;width:1px;height:34px;background:repeating-linear-gradient(#ffffff 0 3px, #e9ecee 3px 6px)"></div>
<div style="left:459px;top:600px;width:1px;height:52px;background:repeating-linear-gradient(#dedede 0 4px, transparent 4px 6px)"></div>
<div style="left:459px;top:653px;width:1px;height:14px;background:repeating-linear-gradient(#ffffff 0 3px, #e9ecee 3px 6px)"></div>
<div style="left:223px;top:565px;width:1px;height:34px;background:repeating-linear-gradient(#ffffff 0 3px, #e9ecee 3px 6px)"></div>
<div style="left:223px;top:600px;width:1px;height:52px;background:repeating-linear-gradient(#ffffff 0 3px, #e9ecee 3px 6px)"></div>
<div style="left:223px;top:653px;width:1px;height:14px;background:repeating-linear-gradient(#ffffff 0 3px, #e9ecee 3px 6px)"></div>
<div style="left:336px;top:565px;width:1px;height:34px;background:repeating-linear-gradient(#ffffff 0 3px, #e9ecee 3px 6px)"></div>
<div style="left:336px;top:653px;width:1px;height:14px;background:repeating-linear-gradient(#ffffff 0 3px, #e9ecee 3px 6px)"></div>
<div class="t" style="left:109.40px;top:540.78px;font-size:13.2px;line-height:13.2px;color:#000;font-weight:bold;font-family:'Liberation Sans',sans-serif;transform:scaleX(0.9733);transform-origin:0 0;">This table is shifted to the right</div>
<div class="t" style="left:109.40px;top:576.08px;font-size:13.2px;line-height:13.2px;color:#000;font-weight:bold;font-family:'Liberation Sans',sans-serif;transform:scaleX(0.9850);transform-origin:0 0;">Footnote inside</div>
<div class="t" style="left:109.80px;top:593.48px;font-size:13.2px;line-height:13.2px;color:#000;font-weight:bold;font-family:'Liberation Sans',sans-serif;">a table<span style="font-size:9px;position:relative;top:-4px">4</span>.</div>
<div class="t" style="left:232.20px;top:610.52px;font-size:13.5px;line-height:13.5px;color:#000;font-weight:normal;font-family:'Liberation Sans',sans-serif;transform:scaleX(1.0220);transform-origin:0 0;">This table has top and bottom cell</div>
<div class="t" style="left:232.20px;top:628.02px;font-size:13.5px;line-height:13.5px;color:#000;font-weight:normal;font-family:'Liberation Sans',sans-serif;transform:scaleX(1.0196);transform-origin:0 0;">padding</div>
</body></html>
